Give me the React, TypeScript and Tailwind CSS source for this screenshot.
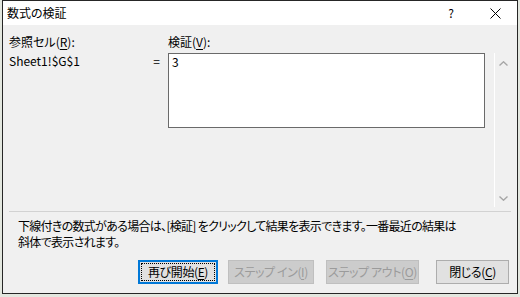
import React from "react";

const font = {
  fontFamily: "'Noto Sans CJK JP', 'Noto Sans', sans-serif",
};

const Key = ({ c }: { c: string }) => (
  <span className="underline underline-offset-[2px] decoration-1">{c}</span>
);

const Chevron = ({ up }: { up?: boolean }) => (
  <svg width="9" height="5" viewBox="0 0 9 5" className="block">
    <path
      d={up ? "M0.5 4.5 L4.5 0.8 L8.5 4.5" : "M0.5 0.5 L4.5 4.2 L8.5 0.5"}
      fill="none"
      stroke="#a6a6a6"
      strokeWidth="1.4"
    />
  </svg>
);

const App = () => {
  return (
    <div
      className="w-[520px] h-[297px] bg-[#e3e7df] pl-[2px] overflow-hidden text-black [font-feature-settings:'palt']"
      style={font}
    >
      <div className="w-[516px] h-[294px] border border-[#262626] bg-[#f0f0f0] flex flex-col">
        {/* title bar */}
        <div className="h-[24px] bg-white flex items-center pl-[4px] text-[12px] leading-[16px]">
          <span>数式の検証</span>
          <span className="ml-auto">?</span>
          <svg width="11" height="11" viewBox="0 0 11 11" className="ml-[36px] mr-[16px]">
            <path d="M0.5 0.5 L10.5 10.5 M10.5 0.5 L0.5 10.5" stroke="#000" strokeWidth="1" />
          </svg>
        </div>

        {/* main area */}
        <div className="flex h-[186px]">
          <div className="flex-1 pl-[6px] pt-[9px] text-[12px] leading-[16px]">
            <div className="grid grid-cols-[159px_317px] gap-y-[3px]">
              <div>
                参照セル(<Key c="R" />):
              </div>
              <div>
                検証(<Key c="V" />):
              </div>
              <div className="flex justify-between pr-[8px]">
                <span>Sheet1!$G$1</span>
                <span>=</span>
              </div>
              <div className="h-[75px] bg-white border border-[#6a6a6a] pl-[3px]">3</div>
            </div>
          </div>
          <div className="w-[17px] mt-[28px] h-[154px] border-l border-white flex flex-col items-center justify-between pt-[8px] pb-[6px]">
            <Chevron up />
            <Chevron />
          </div>
          <div className="w-[6px]" />
        </div>

        <div className="h-px bg-[#d2d2d2] ml-[6px] mr-[6px]" />

        <p className="pl-[15px] mt-[6px] text-[12px] leading-[16px] whitespace-nowrap tracking-[-0.7px]">
          下線付きの数式がある場合は、[検証] をクリックして結果を表示できます。一番最近の結果は
          <br />
          斜体で表示されます。
        </p>

        <div className="flex mt-[10px] text-[12px] leading-[16px] whitespace-nowrap tracking-[-0.4px]">
          <button className="ml-[135px] w-[80px] h-[24px] border-2 border-[#0078d7] bg-[#e1e1e1] p-px">
            <span className="flex items-center justify-center w-full h-full border border-dotted border-black">
              再び開始(<Key c="E" />)
            </span>
          </button>
          <button className="ml-[10px] w-[86px] h-[24px] border border-[#bfbfbf] bg-[#cccccc] text-[#9b9b9b]">
            ステップ イン(<Key c="I" />)
          </button>
          <button className="ml-[12px] w-[93px] h-[24px] border border-[#bfbfbf] bg-[#cccccc] text-[#9b9b9b]">
            ステップ アウト(<Key c="O" />)
          </button>
          <button className="ml-[17px] w-[73px] h-[24px] border border-[#adadad] bg-[#e1e1e1]">
            閉じる(<Key c="C" />)
          </button>
        </div>
      </div>
    </div>
  );
};

export default App;
